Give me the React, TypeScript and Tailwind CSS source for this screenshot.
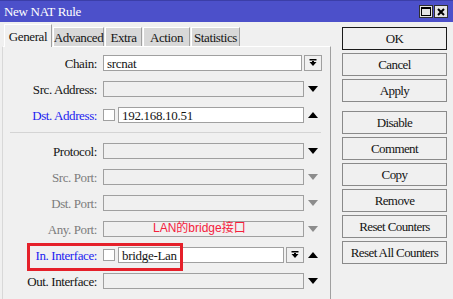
import type { ReactNode } from 'react';

type Tone = 'black' | 'blue' | 'gray';

const toneClass: Record<Tone, string> = {
  black: 'text-[#141414]',
  blue: 'text-[#1c1cf0]',
  gray: 'text-[#7c7c7c]',
};

function Tri({ dir, gray }: { dir: 'up' | 'down'; gray?: boolean }) {
  const fill = gray ? '#8c8c8c' : '#000000';
  return (
    <svg width="10" height="6" viewBox="0 0 10 6">
      {dir === 'down' ? (
        <polygon points="0,0 10,0 5,6" fill={fill} />
      ) : (
        <polygon points="0,6 10,6 5,0" fill={fill} />
      )}
    </svg>
  );
}

function DropBtn() {
  return (
    <div className="flex h-[16px] w-[18px] items-center justify-center border border-[#a0a0a0] bg-[#f0f0f0]">
      <svg width="8" height="8" viewBox="0 0 8 8">
        <rect x="0.5" y="0" width="7" height="1.5" fill="#000" />
        <polygon points="0.5,3 7.5,3 4,7" fill="#000" />
        <rect x="3" y="2" width="2" height="2" fill="#000" />
      </svg>
    </div>
  );
}

function Field({ w, white, children }: { w: string; white?: boolean; children?: ReactNode }) {
  return (
    <div
      className={`flex h-[16px] items-center border border-[#a0a0a0] px-[3px] text-[13px] leading-none tracking-[-0.3px] text-[#141414] ${w} ${
        white ? 'bg-white' : 'bg-[#f0f0f0]'
      }`}
    >
      {children}
    </div>
  );
}

function Check() {
  return <div className="h-[12px] w-[12px] shrink-0 border border-[#a0a0a0] bg-white" />;
}

function ArrowSlot({ dir, gray }: { dir: 'up' | 'down'; gray?: boolean }) {
  return (
    <div className="flex w-[18px] justify-center">
      <Tri dir={dir} gray={gray} />
    </div>
  );
}

function Row({ label, tone = 'black', children, extra }: { label: string; tone?: Tone; children: ReactNode; extra?: ReactNode }) {
  return (
    <div className="relative flex h-[26px] items-center">
      <div className={`w-[94px] text-right text-[13px] leading-none tracking-[-0.4px] ${toneClass[tone]}`}>{label}</div>
      <div className="ml-[6px] flex w-[219px] items-center">{children}</div>
      {extra}
    </div>
  );
}

function Sep() {
  return <div className="ml-[7px] h-px w-[311px] bg-[#d4d4d4]" />;
}

function Btn({ label, main }: { label: string; main?: boolean }) {
  return (
    <div
      className={`flex h-[23px] w-[105px] items-center justify-center bg-[#f0f0f0] text-[13px] leading-none tracking-[-0.6px] text-[#141414] ${
        main ? 'border border-[#1a1a1a]' : 'border border-[#8a8a8a]'
      }`}
    >
      {label}
    </div>
  );
}

const tabs = [
  { name: 'General', w: 'w-[48px]' },
  { name: 'Advanced', w: 'w-[51px]' },
  { name: 'Extra', w: 'w-[37px]' },
  { name: 'Action', w: 'w-[47px]' },
  { name: 'Statistics', w: 'w-[49px]' },
];

export default function App() {
  return (
    <div className="flex h-[299px] w-[453px] flex-col overflow-hidden bg-[#f0f0f0] font-[family-name:Liberation_Serif,serif] font-normal">
      {/* Title bar */}
      <div className="flex h-[22px] shrink-0 items-center border-t border-[#3b3ea8] bg-[#4c50ca] pl-[4px] pr-[5px]">
        <span className="text-[13px] leading-none tracking-[-0.3px] text-white">New NAT Rule</span>
        <div className="ml-auto flex gap-[1px]">
          <div className="flex h-[13px] w-[14px] items-center justify-center border border-[#303030] bg-[#e4e4e4]">
            <div className="h-[9px] w-[10px] border border-t-2 border-black" />
          </div>
          <div className="flex h-[13px] w-[14px] items-center justify-center border border-[#303030] bg-[#e4e4e4]">
            <svg width="8" height="8" viewBox="0 0 8 8">
              <path d="M1 1 L7 7 M7 1 L1 7" stroke="#000" strokeWidth="2" />
            </svg>
          </div>
        </div>
      </div>

      <div className="flex flex-1">
        {/* Left: tabs + panel */}
        <div className="flex w-[331px] flex-col pl-[2px] pt-px">
          <div className="flex h-[23px] items-end pl-[2px]">
            {tabs.map((t, i) =>
              i === 0 ? (
                <div
                  key={t.name}
                  className={`relative z-10 -mb-px flex h-[23px] items-center justify-center border-l border-r border-t border-l-white border-r-[#a0a0a0] border-t-white bg-[#f0f0f0] text-[13px] leading-none tracking-[-0.4px] text-[#141414] ${t.w}`}
                >
                  {t.name}
                </div>
              ) : (
                <div
                  key={t.name}
                  className={`ml-px flex h-[19px] items-center justify-center border-l border-r border-t border-l-white border-r-[#a0a0a0] border-t-white bg-[#d8d8d8] text-[13px] leading-none tracking-[-0.4px] text-[#141414] ${t.w}`}
                >
                  {t.name}
                </div>
              )
            )}
          </div>

          <div className="flex flex-1 flex-col border-l border-r border-t border-l-[#d8d8d8] border-r-[#a0a0a0] border-t-white pt-[3px]">
            <Row label="Chain:">
              <Field w="w-[199px]" white>
                srcnat
              </Field>
              <div className="ml-[2px]">
                <DropBtn />
              </div>
            </Row>
            <Row label="Src. Address:">
              <Field w="w-[201px]" />
              <ArrowSlot dir="down" />
            </Row>
            <Row label="Dst. Address:" tone="blue">
              <Check />
              <div className="ml-[3px]">
                <Field w="w-[186px]" white>
                  192.168.10.51
                </Field>
              </div>
              <ArrowSlot dir="up" />
            </Row>
            <div className="mt-[4px]">
              <Sep />
            </div>
            <div className="mt-[5px]">
              <Row label="Protocol:">
                <Field w="w-[201px]" />
                <ArrowSlot dir="down" />
              </Row>
              <Row label="Src. Port:" tone="gray">
                <Field w="w-[201px]" />
                <ArrowSlot dir="down" gray />
              </Row>
              <Row label="Dst. Port:" tone="gray">
                <Field w="w-[201px]" />
                <ArrowSlot dir="down" gray />
              </Row>
              <Row
                label="Any. Port:"
                tone="gray"
                extra={
                  <span className="absolute left-[150px] top-[6px] font-[family-name:Liberation_Sans,Noto_Sans_CJK_SC,sans-serif] text-[12px] leading-none text-[#f5203c]">
                    LAN的bridge接口
                  </span>
                }
              >
                <Field w="w-[201px]" />
                <ArrowSlot dir="down" gray />
              </Row>
              <Row
                label="In. Interface:"
                tone="blue"
                extra={<div className="absolute left-[24px] top-[1px] h-[28px] w-[156px] border-[3px] border-[#e5202a]" />}
              >
                <Check />
                <div className="ml-[3px]">
                  <Field w="w-[166px]" white>
                    bridge-Lan
                  </Field>
                </div>
                <div className="ml-[2px]">
                  <DropBtn />
                </div>
                <ArrowSlot dir="up" />
              </Row>
              <Row label="Out. Interface:">
                <Field w="w-[201px]" />
                <ArrowSlot dir="down" />
              </Row>
            </div>
            <div className="mt-[5px]">
              <Sep />
            </div>
          </div>
        </div>

        {/* Right: buttons */}
        <div className="ml-[11px] flex flex-col pt-[5px]">
          <div className="flex flex-col gap-[3px]">
            <Btn label="OK" main />
            <Btn label="Cancel" />
            <Btn label="Apply" />
          </div>
          <div className="mt-[9px] flex flex-col gap-[3px]">
            <Btn label="Disable" />
            <Btn label="Comment" />
            <Btn label="Copy" />
            <Btn label="Remove" />
            <Btn label="Reset Counters" />
            <Btn label="Reset All Counters" />
          </div>
        </div>
      </div>
    </div>
  );
}
